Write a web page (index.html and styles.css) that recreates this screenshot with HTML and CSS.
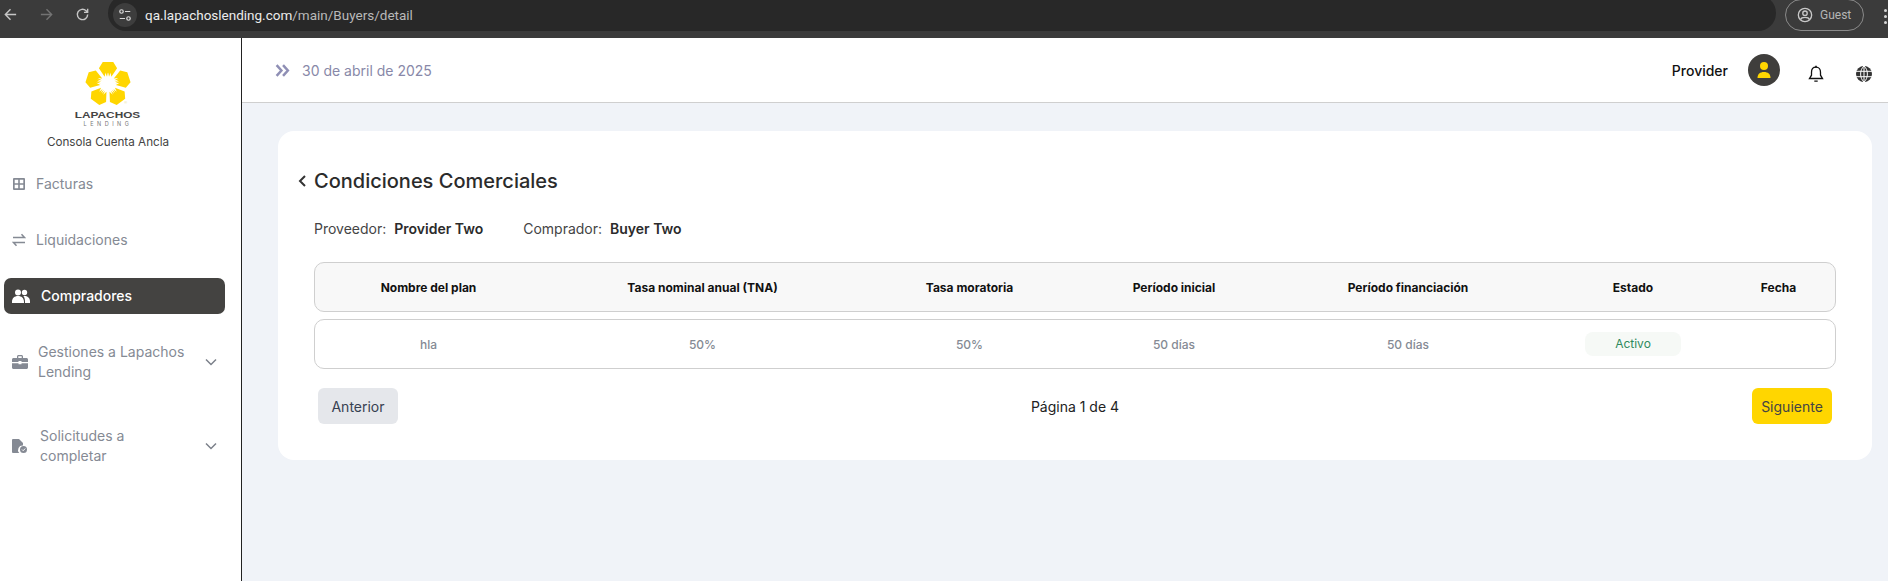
FILE: index.html
```html
<!DOCTYPE html>
<html lang="es">
<head>
<meta charset="utf-8">
<title>Condiciones Comerciales</title>
<link rel="stylesheet" href="styles.css">
</head>
<body>
<div class="chrome">
  <svg class="nav-ic" viewBox="0 0 16 16"><path d="M14 8H3M8 2.500 2.500 8 8 13.500" /></svg>
  <svg class="nav-ic dim" viewBox="0 0 16 16"><path d="M2 8h11M8 2.500 13.500 8 8 13.500" /></svg>
  <svg class="nav-ic" viewBox="0 0 16 16"><path d="M13.500 8A5.500 5.500 0 1 1 11.800 4L13.500 5.700M13.500 1.800v3.900H9.600" /></svg>
  <div class="omnibox">
    <span class="tune"><svg viewBox="0 0 16 16"><circle cx="4" cy="4" r="2"/><path d="M8 4h6M2 12h6"/><circle cx="12" cy="12" r="2"/></svg></span>
    <span class="url">qa.lapachoslending.com<span class="url-path">/main/Buyers/detail</span></span>
  </div>
  <div class="guest">
    <svg viewBox="0 0 18 18"><circle cx="9" cy="9" r="7.500"/><circle cx="9" cy="7" r="2.500"/><path d="M4 14c1-3 9-3 10 0"/></svg>
    <span>Guest</span>
  </div>
  <div class="kebab"><i></i><i></i><i></i></div>
</div>
<div class="app">
  <aside class="sidebar">
    <div class="brand">
      <svg class="flower" viewBox="-23 -23 46 46">
        <defs><path id="petal" d="M-5.500-23 5.500-23 9.500-16.500 3.500-7.500 2.600-12 1.600-7.500 .8-12 0-7.500-.8-12-1.600-7.500-2.600-12-3.500-7.500-9.500-16.500Z"/></defs>
        <use href="#petal"/>
        <use href="#petal" transform="rotate(72)"/>
        <use href="#petal" transform="rotate(144)"/>
        <use href="#petal" transform="rotate(216)"/>
        <use href="#petal" transform="rotate(288)"/>
        <text class="reg" x="17" y="21">®</text>
      </svg>
      <div class="brand-name">LAPACHOS</div>
      <div class="brand-sub">LENDING</div>
      <div class="brand-console">Consola Cuenta Ancla</div>
    </div>
    <nav class="menu">
      <a class="item item-facturas">
        <svg class="ic" viewBox="0 0 14 14"><path fill-rule="evenodd" d="M2 1h10a1 1 0 0 1 1 1v10a1 1 0 0 1-1 1H2a1 1 0 0 1-1-1V2a1 1 0 0 1 1-1Zm.7 1.700v3.500h3.500V2.700Zm5.100 0v3.500h3.500V2.700Zm-5.100 5.100v3.500h3.500V7.800Zm5.100 0v3.500h3.500V7.800Z"/></svg>
        <span>Facturas</span>
      </a>
      <a class="item item-liq">
        <svg class="ic" viewBox="0 0 14 14"><path class="line" d="M1 4.500h11.500L9.500 1.200M13 9.500H1.500l3 3.300"/></svg>
        <span>Liquidaciones</span>
      </a>
      <a class="item active">
        <svg class="ic ic-lg" viewBox="0 0 18 14"><circle cx="6" cy="3.500" r="3"/><circle cx="12.500" cy="3.500" r="2.700"/><path d="M0 13c0-4 2.500-6 6-6s6 2 6 6v1H0ZM13 13.900h5V12c0-3-2.500-5-5.500-5-.5 0-.8 0-1.200.1 1.200 1.300 1.700 3.300 1.700 5.900Z"/></svg>
        <span>Compradores</span>
      </a>
      <a class="item two item-gest">
        <svg class="ic ic-lg" viewBox="0 0 16 14"><path fill-rule="evenodd" d="M5 3V1.500C5 .7 5.700 0 6.500 0h3C10.300 0 11 .7 11 1.500V3h3.500c.8 0 1.500.7 1.500 1.500V7H9.500V6h-3v1H0V4.500C0 3.700.7 3 1.500 3Zm1.300 0h3.400V1.300H6.300ZM0 8.300h6.500v1h3v-1H16v4.200c0 .8-.7 1.500-1.500 1.500h-13C.7 14 0 13.300 0 12.500Z"/></svg>
        <span class="two-label">Gestiones a Lapachos Lending</span>
        <svg class="chev" viewBox="0 0 12 8"><path d="M1 1.500 6 6.500 11 1.500"/></svg>
      </a>
      <a class="item two item-sol">
        <svg class="ic ic-lg" viewBox="0 0 16 14"><path d="M0 1a1 1 0 0 1 1-1h6l4 4v2.500A4.500 4.500 0 0 0 7.200 14H1a1 1 0 0 1-1-1Z"/><circle cx="11.500" cy="10.500" r="3.500"/><path class="tick" d="M10 10.500l1.200 1.200 2-2.200"/></svg>
        <span class="two-label label-sol">Solicitudes a completar</span>
        <svg class="chev" viewBox="0 0 12 8"><path d="M1 1.500 6 6.500 11 1.500"/></svg>
      </a>
    </nav>
  </aside>
  <main class="main">
    <header class="topbar">
      <svg class="dbl" viewBox="0 0 14 12"><path d="M1.500 1 6 6 1.500 11M7.500 1 12 6 7.500 11"/></svg>
      <span class="date">30 de abril de 2025</span>
      <span class="spacer"></span>
      <span class="user">Provider</span>
      <span class="avatar"><svg viewBox="0 0 16 16"><circle cx="8" cy="4" r="4"/><path d="M1.500 16C1.500 12 4 10 8 10s6.500 2 6.500 6Z"/></svg></span>
      <svg class="bell" viewBox="0 0 16 18"><path d="M8 2.200c-3 0-4.500 2.300-4.500 5v3L1.500 13.500h13l-2-3.300v-3c0-2.700-1.500-5-4.500-5Z"/><path class="fill" d="M6.300 15.500h3.400v1.300H6.300ZM7.200 .8h1.600v2H7.200Z"/></svg>
      <svg class="globe" viewBox="0 0 16 16"><circle class="g" cx="8" cy="8" r="8"/><path d="M0 5.300h16M0 10.700h16M8 0v16M8 0C3.500 3.500 3.500 12.500 8 16M8 0c4.500 3.500 4.500 12.500 0 16"/></svg>
    </header>
    <section class="content">
      <div class="card">
        <div class="title-row">
          <svg class="back" viewBox="0 0 8 12"><path d="M6.500 1 1.500 6 6.500 11"/></svg>
          <h1>Condiciones Comerciales</h1>
        </div>
        <div class="parties">
          <span class="party">Proveedor: <b>Provider Two</b></span>
          <span class="party">Comprador: <b>Buyer Two</b></span>
        </div>
        <div class="row head">
          <span>Nombre del plan</span>
          <span>Tasa nominal anual (TNA)</span>
          <span>Tasa moratoria</span>
          <span>Período inicial</span>
          <span>Período financiación</span>
          <span>Estado</span>
          <span>Fecha</span>
        </div>
        <div class="row body">
          <span>hla</span>
          <span>50%</span>
          <span>50%</span>
          <span>50 días</span>
          <span>50 días</span>
          <span><em class="pill">Activo</em></span>
          <span></span>
        </div>
        <div class="pager">
          <button class="btn prev">Anterior</button>
          <span class="page">Página 1 de 4</span>
          <button class="btn next">Siguiente</button>
        </div>
      </div>
    </section>
  </main>
</div>
</body>
</html>
```
FILE: styles.css
```css
* { box-sizing: border-box; }
html, body { margin: 0; height: 100%; overflow: hidden; }
body { font-family: Inter, "Liberation Sans", sans-serif; background: #f0f3f8; color: #222; display: flex; flex-direction: column; }

.chrome { height: 38px; background: #3b3b3b; display: flex; align-items: flex-start; flex: none; padding-left: 3px; overflow: hidden; font-family: Roboto, "Liberation Sans", sans-serif; }
.nav-ic { width: 15px; height: 15px; margin: 7px 21px 0 0; fill: none; stroke: #c6c6c6; stroke-width: 1.500; flex: none; }
.nav-ic.dim { stroke: #737373; }
.omnibox { width: 1668px; height: 36px; margin: -5px 0 0 -3px; background: #282828; border-radius: 18px; display: flex; align-items: center; padding: 4px 0 0 5px; flex: none; }
.tune { width: 24px; height: 24px; border-radius: 50%; background: #3d3d3d; display: flex; align-items: center; justify-content: center; }
.tune svg { width: 14px; height: 14px; fill: none; stroke: #d8d8d8; stroke-width: 1.400; }
.url { margin-left: 8px; font-size: 13.500px; color: #ececec; }
.url-path { color: #b9b9b9; }
.guest { width: 79px; height: 32px; margin: -1px 0 0 9px; border: 1px solid #8a8a8a; border-radius: 16px; display: flex; align-items: center; padding-left: 11px; gap: 7px; color: #b5b5b5; font-size: 12px; flex: none; }
.guest svg { width: 16px; height: 16px; fill: none; stroke: #c8c8c8; stroke-width: 1.500; }
.kebab { margin: 9px 0 0 20px; display: flex; flex-direction: column; gap: 3px; }
.kebab i { width: 3px; height: 3px; border-radius: 50%; background: #d5d5d5; display: block; }

.app { flex: 1; display: flex; min-height: 0; }
.sidebar { width: 242px; flex: none; background: #fff; border-right: 1px solid #222; }
.brand { height: 136px; display: flex; flex-direction: column; align-items: center; padding: 24px 25px 0 0; }
.flower { width: 44px; height: 44px; fill: #ffd600; flex: none; margin-bottom: -2px; overflow: visible; }
.reg { font-family: "Liberation Sans", sans-serif; font-size: 4px; fill: #e8d880; }
.brand-name { font-family: "Liberation Sans", sans-serif; font-weight: 700; font-size: 8.500px; line-height: 8px; margin-top: 7px; color: #444; transform: scaleX(1.390); }
.brand-sub { font-size: 5.500px; line-height: 8px; letter-spacing: 3.500px; color: #777; margin-top: 1px; }
.brand-console { font-size: 11.700px; line-height: 16px; margin-top: 6px; color: #444; white-space: nowrap; }

.menu { display: flex; flex-direction: column; }
.item { display: flex; align-items: center; font-size: 14px; line-height: 20px; color: #858a94; padding-left: 12px; }
.ic { width: 14px; height: 14px; fill: #858a94; flex: none; margin-right: 10px; }
.ic .line { fill: none; stroke: #858a94; stroke-width: 1.500; }
.ic-lg { width: 16px; height: 14px; margin-right: 10px; }
.item-facturas { height: 20px; }
.item-liq { height: 20px; margin-top: 36px; }
.active { width: 221px; height: 36px; margin: 28px 0 0 4px; padding-left: 8px; background: #444341; border-radius: 7px; color: #fff; font-weight: 500; }
.active .ic { fill: #fff; width: 18px; margin-right: 11px; }
.two { width: 225px; height: 40px; }
.item-gest { margin-top: 28px; }
.item-sol { margin-top: 44px; }
.two-label { width: 152px; }
.label-sol { width: 130px; margin-left: 2px; }
.tick { fill: none; stroke: #fff; stroke-width: 1; }
.chev { width: 12px; height: 8px; margin-left: auto; margin-right: 8px; fill: none; stroke: #7b808a; stroke-width: 1.500; }

.main { flex: 1; min-width: 0; display: flex; flex-direction: column; }
.topbar { height: 65px; flex: none; background: #fff; border-bottom: 1px solid #cfcfcf; display: flex; align-items: center; padding: 0 16px 0 33px; }
.dbl { width: 15px; height: 13px; fill: none; stroke: #8f8fb5; stroke-width: 2.300; margin-right: 12px; }
.date { font-size: 14px; color: #8888a8; }
.spacer { flex: 1; }
.user { font-size: 14px; font-weight: 500; color: #111; margin-right: 20px; }
.avatar { width: 32px; height: 32px; border-radius: 50%; background: #3f3e3c; display: flex; align-items: center; justify-content: center; margin-right: 28px; }
.avatar svg { width: 16px; height: 16px; fill: #ffd600; }
.bell { width: 16px; height: 18px; margin: 7px 32px 0 0; fill: none; stroke: #111; stroke-width: 1.300; }
.bell .fill { fill: #111; stroke: none; }
.globe { width: 16px; height: 16px; margin-top: 7px; fill: none; stroke: #fff; stroke-width: 1; }
.globe .g { fill: #333; stroke: none; }

.content { flex: 1; padding: 28px 0 0 36px; }
.card { width: 1594px; height: 329px; background: #fff; border-radius: 16px; padding: 35px 36px 0; }
.title-row { display: flex; align-items: center; height: 30px; margin-left: -16px; }
.back { width: 9px; height: 12px; fill: none; stroke: #333; stroke-width: 2; margin-right: 7px; }
h1 { margin: 0; font-size: 20px; line-height: 30px; font-weight: 500; color: #2b2b2b; }
.parties { display: flex; gap: 40px; margin-top: 23px; height: 20px; font-size: 14px; line-height: 20px; color: #444; }
.party b { font-weight: 600; color: #2b2b2b; margin-left: 4px; }
.row { display: grid; grid-template-columns: 227px 321px 213px 196px 272px 178px 113px; align-items: center; text-align: center; height: 50px; width: 1522px; border: 1px solid #cfcfcf; border-radius: 10px; font-size: 12px; }
.head { margin-top: 23px; background: #f8f8f8; font-weight: 700; color: #111; }
.body { margin-top: 7px; color: #858a94; font-weight: 500; }
.pill { display: inline-block; width: 96px; height: 24px; line-height: 24px; border-radius: 8px; background: #f6f9f6; color: #2f8a5d; font-style: normal; font-weight: 400; }
.pager { display: flex; justify-content: space-between; align-items: center; margin: 19px 4px 0; }
.btn { width: 80px; height: 36px; border: 0; border-radius: 6px; font-family: inherit; font-size: 14px; padding: 0; }
.prev { background: #e5e7eb; color: #374151; }
.next { background: #ffd600; color: #444; }
.page { font-size: 14px; color: #222; }
```
